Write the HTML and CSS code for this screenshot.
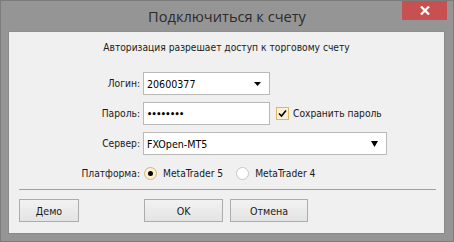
FILE: index.html
```html
<!DOCTYPE html>
<html lang="ru">
<head>
<meta charset="utf-8">
<title>Подключиться к счету</title>
<link rel="stylesheet" href="styles.css">
</head>
<body>
<div class="window">
  <div class="titlebar">
    <div class="title">Подключиться к счету</div>
    <div class="close"><svg width="10" height="9" viewBox="0 0 10 9"><path d="M1 0.5 L9 8.5 M9 0.5 L1 8.5" stroke="#fff" stroke-width="2.2"/></svg></div>
  </div>
  <div class="client">
    <div class="heading">Авторизация разрешает доступ к торговому счету</div>
    <div class="form">
      <div class="label">Логин:</div>
      <div class="ctrl">
        <div class="box combo small"><span class="val">20600377</span><svg class="arrow" width="7" height="4" viewBox="0 0 7 4"><path d="M0 0 H7 L3.5 4 Z" fill="#000"/></svg></div>
      </div>
      <div class="label">Пароль:</div>
      <div class="ctrl">
        <div class="box small"><span class="val dots">••••••••</span></div>
        <label class="check"><span class="cb"><svg width="9" height="9" viewBox="0 0 9 9"><path d="M1 4.5 L3.5 7 L8 1.5" stroke="#000" stroke-width="1.6" fill="none"/></svg></span>Сохранить пароль</label>
      </div>
      <div class="label">Сервер:</div>
      <div class="ctrl">
        <div class="box combo wide"><span class="val">FXOpen-MT5</span><svg class="arrow" width="7" height="6" viewBox="0 0 7 6"><path d="M0 0 H7 L3.5 6 Z" fill="#000"/></svg></div>
      </div>
      <div class="label">Платформа:</div>
      <div class="ctrl">
        <span class="radio on"><span class="dot"></span></span><span class="rlabel">MetaTrader 5</span>
        <span class="radio"></span><span class="rlabel">MetaTrader 4</span>
      </div>
    </div>
    <div class="sep"></div>
    <div class="buttons">
      <button class="btn demo">Демо</button>
      <button class="btn ok">OK</button>
      <button class="btn cancel">Отмена</button>
    </div>
  </div>
</div>
</body>
</html>
```

FILE: styles.css
```css
* { box-sizing: border-box; }
html, body { margin: 0; padding: 0; }
body {
  width: 454px;
  height: 242px;
  background: #939393;
  font-family: "DejaVu Sans Condensed", "Liberation Sans", sans-serif;
  font-size: 10.2px;
  color: #000;
  overflow: hidden;
}
.window {
  width: 454px;
  height: 242px;
  border: 1px solid #7c7c7c;
  background: #959595;
  position: relative;
}
.titlebar {
  height: 30px;
  display: flex;
  align-items: center;
  justify-content: center;
}
.title {
  font-family: "Open Sans", "Noto Sans", sans-serif;
  font-size: 14.6px;
  color: #2b2b2b;
}
.close {
  position: absolute;
  top: 0;
  right: 6px;
  width: 45px;
  height: 19px;
  background: #c75050;
  display: flex;
  align-items: center;
  justify-content: center;
}
.client {
  margin: 0 8px 0 7px;
  height: 203px;
  background: #f0f0f0;
  border: 1px solid #8a8a8a;
  border-top-color: #8f8f8f;
}
.heading {
  padding-top: 8px;
  line-height: 16px;
  text-align: center;
  color: #1a1a1a;
}
.form {
  margin-top: 16px;
  display: grid;
  grid-template-columns: 131px auto;
  column-gap: 3px;
  grid-auto-rows: 23px;
  row-gap: 7px;
}
.label {
  text-align: right;
  display: flex;
  align-items: center;
  justify-content: flex-end;
  color: #1a1a1a;
}
.ctrl {
  display: flex;
  align-items: center;
}
.box {
  height: 23px;
  background: #fff;
  border: 1px solid #b9b9b9;
  display: flex;
  align-items: center;
  padding-left: 3px;
  position: relative;
}
.box.small { width: 127px; }
.box.wide { width: 244px; }
.val { font-size: 10.6px; color: #000; }
.dots { font-size: 9px; font-weight: bold; letter-spacing: -0.6px; }
.arrow { position: absolute; right: 8px; top: 50%; transform: translateY(-50%); }
.check {
  display: flex;
  align-items: center;
  margin-left: 6px;
  color: #1a1a1a;
}
.cb {
  width: 13px;
  height: 13px;
  border: 1px solid #d9b86a;
  background: #fcf0d2;
  display: flex;
  align-items: center;
  justify-content: center;
  margin-right: 4px;
}
.radio {
  width: 13px;
  height: 13px;
  border-radius: 50%;
  border: 1px solid #c8c8c8;
  background: #fff;
  display: flex;
  align-items: center;
  justify-content: center;
  margin-left: 1px;
}
.radio.on {
  border-color: #d8b565;
  background: #fcf0d2;
}
.dot {
  width: 5px;
  height: 5px;
  border-radius: 50%;
  background: #000;
}
.rlabel {
  margin-left: 6px;
  margin-right: 12px;
  color: #1a1a1a;
}
.sep {
  margin: 4px 8px 0 10px;
  height: 1px;
  background: #a0a0a0;
}
.buttons {
  margin-top: 9px;
  display: flex;
  padding-left: 10px;
}
.btn {
  height: 23px;
  border: 1px solid #acacac;
  background: linear-gradient(#f2f2f2, #e4e4e4);
  font-family: inherit;
  font-size: 10.6px;
  color: #1a1a1a;
  padding: 0;
}
.demo { width: 60px; }
.ok { width: 79px; margin-left: 65px; }
.cancel { width: 78px; margin-left: 7px; }
```
